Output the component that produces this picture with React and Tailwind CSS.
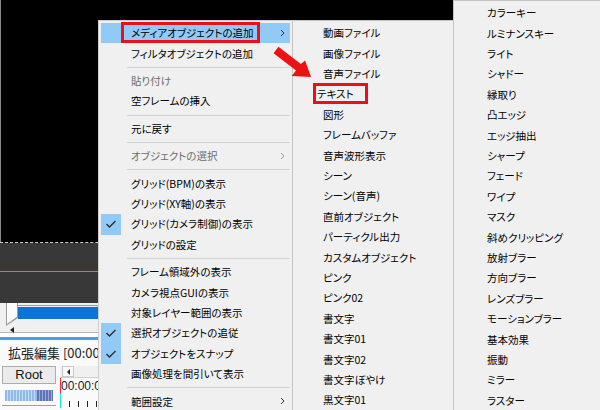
import React from "react";

const mainMenu = [
  { t: "メディアオブジェクトの追加", hl: true, sub: true },
  { t: "フィルタオブジェクトの追加" },
  "sep",
  { t: "貼り付け", off: true },
  { t: "空フレームの挿入" },
  "sep",
  { t: "元に戻す" },
  "sep",
  { t: "オブジェクトの選択", off: true, sub: true },
  "sep",
  { t: "グリッド(BPM)の表示" },
  { t: "グリッド(XY軸)の表示" },
  { t: "グリッド(カメラ制御)の表示", check: true },
  { t: "グリッドの設定" },
  "sep",
  { t: "フレーム領域外の表示" },
  { t: "カメラ視点GUIの表示" },
  { t: "対象レイヤー範囲の表示" },
  { t: "選択オブジェクトの追従", check: true },
  { t: "オブジェクトをスナップ", check: true },
  { t: "画像処理を間引いて表示" },
  "sep",
  { t: "範囲設定", sub: true },
];

const mediaMenu = [
  "動画ファイル",
  "画像ファイル",
  "音声ファイル",
  "テキスト",
  "図形",
  "フレームバッファ",
  "音声波形表示",
  "シーン",
  "シーン(音声)",
  "直前オブジェクト",
  "パーティクル出力",
  "カスタムオブジェクト",
  "ピンク",
  "ピンク02",
  "書文字",
  "書文字01",
  "書文字02",
  "書文字ぼやけ",
  "黒文字01",
];

const filterMenu = [
  "カラーキー",
  "ルミナンスキー",
  "ライト",
  "シャドー",
  "縁取り",
  "凸エッジ",
  "エッジ抽出",
  "シャープ",
  "フェード",
  "ワイプ",
  "マスク",
  "斜めクリッピング",
  "放射ブラー",
  "方向ブラー",
  "レンズブラー",
  "モーションブラー",
  "基本効果",
  "振動",
  "ミラー",
  "ラスター",
];

const Chevron = ({ off }) => (
  <svg width="5" height="8" viewBox="0 0 5 8" className="ml-auto mr-[5px]">
    <polyline
      points="1,1 4,4 1,7"
      fill="none"
      stroke={off ? "#9a9a9a" : "#333"}
      strokeWidth="1"
    />
  </svg>
);

const Check = () => (
  <svg width="20" height="20" viewBox="0 0 20 20">
    <polyline
      points="5.5,10 8.5,13 14.5,7"
      fill="none"
      stroke="#2b2b2b"
      strokeWidth="1.3"
    />
  </svg>
);

const Item = ({ item, gap }) => (
  <div
    className={`flex items-center h-[20.4px] ${item.hl ? "bg-[#91c9f7]" : ""}`}
  >
    <div
      className={`w-[20px] h-full flex items-center justify-center ${
        item.check ? "bg-[#91c9f7]" : ""
      }`}
    >
      {item.check && <Check />}
    </div>
    <span
      className={`${gap} whitespace-nowrap ${
        item.off ? "text-[#6d6d6d]" : "text-black"
      }`}
    >
      {item.t}
    </span>
    {item.sub && <Chevron off={item.off} />}
  </div>
);

const Ticks = () => (
  <div className="flex items-end gap-[8px] pl-[8px] h-[7px]">
    {[0, 1, 2, 3, 4].map((i) => (
      <div key={i} className="w-px h-[6px] bg-[#222]" />
    ))}
  </div>
);

export default function App() {
  return (
    <div className="relative w-[600px] h-[410px] overflow-hidden bg-black font-['Meiryo_UI','Noto_Sans_CJK_JP',sans-serif] text-[10.5px] [font-feature-settings:'palt']">
      {/* underlying editor */}
      <div className="flex flex-col w-full">
        <div className="h-[242px] bg-black border-l border-[#8a8a8a]" />
        <div className="border-t border-dashed border-[#cfcfcf]" />
        <div className="h-[60px] bg-[#383838] flex flex-col">
          <div className="h-[28px]" />
          <div className="h-px bg-[#2fd12f]" />
        </div>
        <div className="h-[30px] bg-[#f0f0f0] border-b border-[#b5b5b5] relative">
          <div className="ml-[17px] mt-[2px] border-t border-[#9a9a9a]" />
          <div className="ml-[18px] mt-[1px] h-[12px] bg-[#0c74d6]" />
          <div className="absolute left-[6px] top-0 w-[12px] h-[23px] bg-[#9a9a9a] [clip-path:polygon(0_0,100%_0,100%_65%,0_100%)]" />
          <div className="absolute left-[7px] top-0 w-[10px] h-[21px] bg-[#fbfbfb] [clip-path:polygon(0_0,100%_0,100%_65%,0_100%)]" />
          <div className="absolute left-[10px] top-[24px] w-0 h-0 border-t-[3px] border-t-transparent border-b-[3px] border-b-transparent border-r-[4px] border-r-[#222]" />
        </div>
        <div className="h-[4px] bg-white" />
        <div className="h-[3px] bg-[#4b9fe6]" />
        <div className="h-[70px] bg-[#fafafa] flex flex-col">
          <div className="h-[26px] flex items-center pl-[8px] text-[13px] text-[#222] [font-feature-settings:normal]">
            拡張編集 [00:00:00
          </div>
          <div className="flex">
            <div className="w-[60px] flex flex-col pl-[2px]">
              <div className="w-[54px] h-[18px] bg-[#ebebeb] border border-[#adadad] flex items-center justify-center text-[13px] text-[#111] [font-feature-settings:normal] font-['Liberation_Sans','Noto_Sans',sans-serif]">
                Root
              </div>
              <div className="flex ml-[3px] mt-[6px] h-[11px] w-[48px]">
                <div className="w-[32px] h-full bg-[repeating-linear-gradient(90deg,#8fbbea_0_2px,#c4dcf5_2px_3px)]" />
                <div className="w-[16px] h-full bg-[repeating-linear-gradient(90deg,#5e75b8_0_2px,#9aabd9_2px_3px)]" />
              </div>
              <div className="w-[54px] mt-[4px] border-t border-[#a0a0a0]" />
            </div>
            <div className="flex-1 flex flex-col">
              <div className="h-[12px] flex items-center bg-[#f0f0f0] border-b border-[#d0d0d0]">
                <div className="ml-[2px] w-[12px] h-[11px] flex items-center justify-center bg-[#f8f8f8] border border-[#c8c8c8]">
                  <div className="w-0 h-0 border-t-[3px] border-t-transparent border-b-[3px] border-b-transparent border-r-[3px] border-r-[#222]" />
                </div>
              </div>
              <div className="flex">
                <div className="w-px h-[30px] flex flex-col">
                  <div className="h-[15px] bg-[#ff2a2a]" />
                  <div className="h-[15px] bg-[#19e0e0]" />
                </div>
                <div className="flex flex-col">
                  <div className="text-[12px] leading-[14px] mt-[1px] text-[#222] font-['Liberation_Sans',sans-serif] [font-feature-settings:normal]">
                    00:00:00
                  </div>
                  <div className="mt-[7px]">
                    <Ticks />
                  </div>
                </div>
              </div>
            </div>
          </div>
        </div>
      </div>

      {/* context menu */}
      <div className="absolute left-[98px] top-[20px] w-[195px] bg-[#f0f0f0] border border-[#cfcfcf] p-[2px]">
        {mainMenu.map((m, i) =>
          m === "sep" ? (
            <div key={i} className="h-[7px] flex items-center pl-[26px]">
              <div className="h-px w-full bg-[#d2d2d2]" />
            </div>
          ) : (
            <Item key={i} item={m} gap="ml-[10px]" />
          )
        )}
      </div>

      {/* media object submenu */}
      <div className="absolute left-[292px] top-[20px] w-[162px] h-[420px] bg-[#f0f0f0] border border-[#c4c4c4] p-[2px]">
        {mediaMenu.map((t, i) => (
          <Item
            key={i}
            item={{ t }}
            gap={t === "テキスト" ? "ml-[2px]" : "ml-[8px]"}
          />
        ))}
      </div>

      {/* filter submenu */}
      <div className="absolute left-[453px] top-0 w-[160px] h-[420px] bg-[#f0f0f0] border border-[#c4c4c4] p-[2px]">
        {filterMenu.map((t, i) => (
          <Item key={i} item={{ t }} gap="ml-[11px]" />
        ))}
      </div>

      {/* annotations */}
      <div className="absolute left-[121px] top-[22px] w-[139px] h-[21px] border-[3px] border-[#e8101a]" />
      <div className="absolute left-[313px] top-[83px] w-[55px] h-[21px] border-[3px] border-[#e8101a]" />
      <svg
        className="absolute left-[268px] top-[42px]"
        width="48"
        height="40"
        viewBox="268 42 48 40"
      >
        <polygon
          points="278.4,46.8 300.8,64 305.1,60.5 311,77 291.7,75.9 296,70.4 273.6,53.2"
          fill="#ee1111"
        />
      </svg>
    </div>
  );
}
